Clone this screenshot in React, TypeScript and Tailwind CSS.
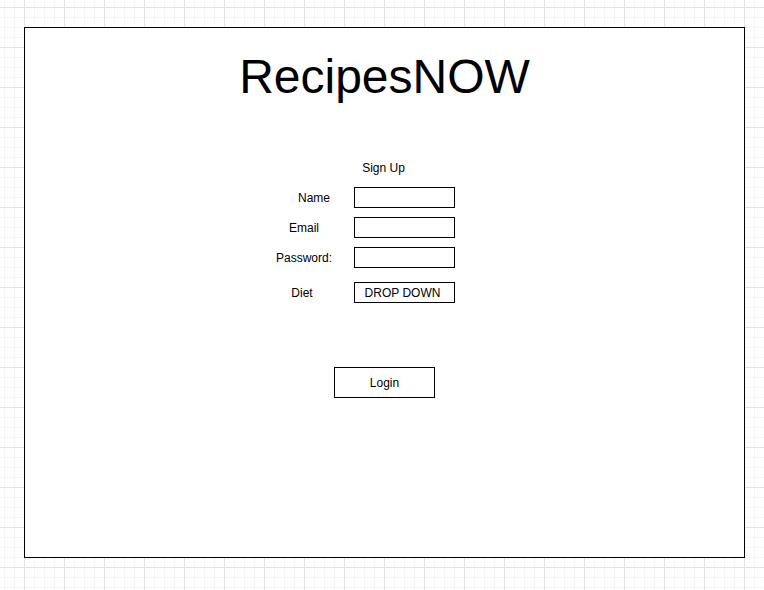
export default function App() {
  return (
    <div className="w-[764px] h-[590px] overflow-hidden pt-[27px] pl-[24px] bg-white bg-[linear-gradient(to_right,#e2e2e2_1px,transparent_1px),linear-gradient(to_bottom,#e2e2e2_1px,transparent_1px),linear-gradient(to_right,#f5f5f5_1px,transparent_1px),linear-gradient(to_bottom,#f5f5f5_1px,transparent_1px)] bg-size-[40px_40px,40px_40px,10px_10px,10px_10px] bg-position-[24px_7px,24px_7px,4px_7px,4px_7px] font-['Liberation_Sans',Arial,sans-serif] text-black">
      <div className="w-[721px] h-[531px] border border-black bg-white flex flex-col items-center">
        <h1 className="mt-[25px] text-[48px] leading-[48px]">RecipesNOW</h1>

        <div className="mt-[60px] pr-[2px] text-[12px] leading-[14px]">Sign Up</div>

        <div className="self-start ml-[239px] mt-[12px] flex flex-col text-[12px]">
          <div className="flex items-center h-[21px]">
            <div className="w-[80px] pl-[20px] text-center">Name</div>
            <div className="ml-[10px] w-[101px] h-[21px] border border-black" />
          </div>
          <div className="flex items-center h-[21px] mt-[9px]">
            <div className="w-[80px] text-center">Email</div>
            <div className="ml-[10px] w-[101px] h-[21px] border border-black" />
          </div>
          <div className="flex items-center h-[21px] mt-[9px]">
            <div className="w-[80px] text-center">Password:</div>
            <div className="ml-[10px] w-[101px] h-[21px] border border-black" />
          </div>
          <div className="flex items-center h-[21px] mt-[14px]">
            <div className="w-[80px] pr-[4px] text-center">Diet</div>
            <div className="ml-[10px] w-[101px] h-[21px] pr-[4px] border border-black flex items-center justify-center">
              DROP DOWN
            </div>
          </div>
        </div>

        <button className="mt-[64px] w-[101px] h-[31px] border border-black bg-white text-[12px] flex items-center justify-center">
          Login
        </button>
      </div>
    </div>
  );
}
